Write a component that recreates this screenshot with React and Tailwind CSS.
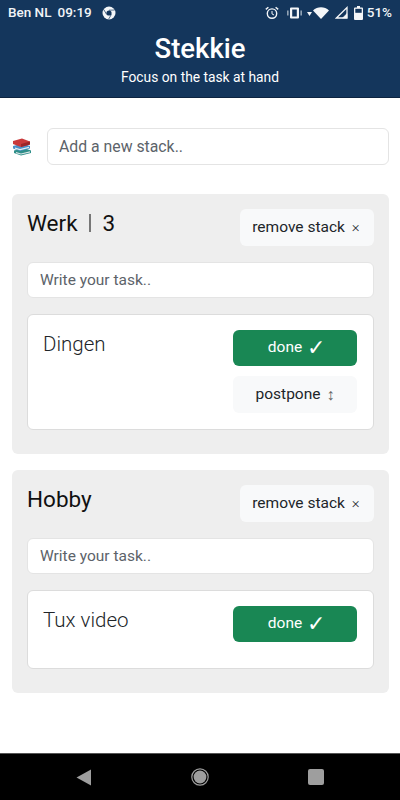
import { useState } from "react";

// status bar icons, drawn by hand
function ChromeIcon() {
  return (
    <svg width="14" height="14" viewBox="0 0 14 14">
      <circle cx="7" cy="7" r="6.5" fill="#f4f6f8" />
      <circle cx="7" cy="7" r="2.6" fill="#14365c" />
      <path d="M7 4.2 L12.6 4 M9.4 8.4 L6.6 13.2 M4.6 8.4 L1.8 3.6" stroke="#14365c" strokeWidth="0.7" />
    </svg>
  );
}

function StatusIcons() {
  return (
    <div className="flex items-center">
      <svg width="14" height="14" viewBox="0 0 14 14" className="mr-[8px]" fill="none" stroke="#f4f6f8">
        <circle cx="7" cy="7.6" r="4.7" strokeWidth="1.4" />
        <path d="M7 5v2.9l2 1.1" strokeWidth="1" />
        <path d="M0.8 3.4 L3.4 1.2 M13.2 3.4 L10.6 1.2" strokeWidth="1.4" />
      </svg>
      <svg width="15" height="12" viewBox="0 0 15 12" className="mr-[5px]" fill="#f4f6f8">
        <path d="M4 0.5h7a1 1 0 0 1 1 1v9a1 1 0 0 1-1 1H4a1 1 0 0 1-1-1v-9a1 1 0 0 1 1-1zM5.2 2.4v7.2h4.6V2.4z" />
        <rect x="0.2" y="3.5" width="1.3" height="5" opacity="0.7" />
        <rect x="13.5" y="3.5" width="1.3" height="5" opacity="0.7" />
      </svg>
      <svg width="5" height="4" viewBox="0 0 5 4" className="mr-[1px] mt-[3px]" fill="#f4f6f8">
        <path d="M0 0h5L2.5 4z" />
      </svg>
      <svg width="16" height="12" viewBox="0 0 16 12" className="mr-[6px]" fill="#f4f6f8">
        <path d="M0 3.4 C4.4 -0.8 11.6 -0.8 16 3.4 L8 12z" />
      </svg>
      <svg width="14" height="13" viewBox="0 0 14 13" className="mr-[5px]" fill="none" stroke="#f4f6f8">
        <path d="M1.4 12 L12 1.6 V12z" strokeWidth="1.3" />
        <path d="M7.5 12 L12 7.6 V12z" fill="#f4f6f8" strokeWidth="0.5" />
      </svg>
      <svg width="9" height="14" viewBox="0 0 9 14" className="mr-[4px]" fill="#f4f6f8">
        <path d="M3 0h3v1.4h2a1 1 0 0 1 1 1V13a1 1 0 0 1-1 1H1a1 1 0 0 1-1-1V2.4a1 1 0 0 1 1-1h2z" />
        <rect x="1.3" y="2.8" width="6.4" height="4" fill="#14365c" />
      </svg>
      <span className="text-[13.5px] font-medium text-[#f1f4f7]">51%</span>
    </div>
  );
}

function BooksIcon() {
  return (
    <svg width="20" height="18" viewBox="0 0 20 18">
      <path d="M2 12.5 L12 10 L19 12.5 V15 L9 17.5 L2 15z" fill="#2f8f8a" />
      <path d="M4 14 L9 15.4 L18 13.2 V14.4 L9 16.6 L4 15.2z" fill="#dfe6e6" />
      <path d="M1 8 L11 5.5 L18 8 V10.5 L8 13 L1 10.5z" fill="#4a90c8" />
      <path d="M3 9.6 L8 11 L17 8.8 V10 L8 12.2 L3 10.8z" fill="#e9eeee" />
      <path d="M1 3 L10 0.5 L18 3.4 V6.4 L9 9 L1 6z" fill="#c9393b" />
      <path d="M9 6 L18 3.4 V6.4 L9 9z" fill="#9c2528" />
    </svg>
  );
}

function Task({ name, postpone }) {
  return (
    <div className="flex justify-between bg-white rounded-md border border-[#dcdcdc] pl-[15px] pr-[16px] pt-[15px] pb-[16px]">
      <span className="text-[20.5px] leading-[28px] font-light text-[#212529]">{name}</span>
      <div className="flex flex-col w-[124px]">
        <button className="h-[36px] mb-[10px] pl-[3px] rounded-md bg-[#198754] text-white text-[15.5px] flex items-center justify-center">
          done <span className="ml-[5px] text-[22px] leading-none">✓</span>
        </button>
        {postpone && (
          <button className="h-[37px] rounded-md bg-[#f8f9fa] text-[#212529] text-[15.5px] flex items-center justify-center">
            postpone <span className="ml-[6px] text-[16px] font-light text-[#666]">↕</span>
          </button>
        )}
      </div>
    </div>
  );
}

function Stack({ title, count, tasks }) {
  return (
    <section className="bg-[#eeeeee] rounded-md px-[15px] pt-[15px] pb-[24px]">
      <div className="flex justify-between items-start h-[37px]">
        <h2 className="text-[22.5px] leading-[28px] text-[#111] font-normal flex items-center">
          {title}
          {count && (
            <>
              <span className="ml-[11px] mr-[12px] w-[2px] h-[18px] bg-[#777]" />
              {count}
            </>
          )}
        </h2>
        <button className="h-[37px] w-[134px] pr-[2px] rounded-md bg-[#f8f9fa] text-[#212529] text-[15.5px] flex items-center justify-center">
          remove stack <span className="ml-[7px] text-[15px] font-light">×</span>
        </button>
      </div>
      <input
        placeholder="Write your task.."
        className="mt-[16px] w-full h-[36px] rounded-md border border-[#e4e4e4] bg-white px-[12px] text-[15.5px] placeholder:text-[#5c636a] outline-none"
      />
      <div className="mt-[16px]">
        {tasks.map((t) => (
          <Task key={t.name} name={t.name} postpone={t.postpone} />
        ))}
      </div>
    </section>
  );
}

export default function App() {
  const [stack, setStack] = useState("");

  return (
    <div className="h-[800px] w-[400px] flex flex-col bg-white overflow-hidden font-['Roboto',sans-serif]">
      <header className="h-[98px] bg-[#14365c] border-b border-[#0d2440] text-white">
        <div className="h-[25px] pl-[8px] pr-[8px] flex items-center justify-between">
          <div className="flex items-center text-[13.5px] font-medium text-[#f1f4f7]">
            <span>Ben NL</span>
            <span className="ml-[6px]">09:19</span>
            <span className="ml-[10px]">
              <ChromeIcon />
            </span>
          </div>
          <StatusIcons />
        </div>
        <h1 className="text-center text-[27.5px] leading-[34px] font-medium mt-[7px]">Stekkie</h1>
        <p className="text-center text-[13.8px] leading-[20px] mt-[1px]">Focus on the task at hand</p>
      </header>

      <main className="flex-1 pl-[12px] pt-[30px] pr-[11px]">
        <div className="flex items-center">
          <span className="w-[35px] shrink-0">
            <BooksIcon />
          </span>
          <input
            value={stack}
            onChange={(e) => setStack(e.target.value)}
            placeholder="Add a new stack.."
            className="flex-1 min-w-0 h-[37px] rounded-md border border-[#e4e4e4] bg-white px-[11px] text-[15.8px] placeholder:text-[#5c636a] outline-none"
          />
        </div>

        <div className="mt-[29px] flex flex-col gap-[16px]">
          <Stack title="Werk" count="3" tasks={[{ name: "Dingen", postpone: true }]} />
          <Stack title="Hobby" tasks={[{ name: "Tux video" }]} />
        </div>
      </main>

      <nav className="h-[47px] bg-black border-t border-[#555] flex items-center justify-center gap-[99px] pr-[1px]">
        <svg width="16" height="17" viewBox="0 0 16 17" fill="#9e9e9e">
          <path d="M15 0.5V16.5L0.5 8.5z" />
        </svg>
        <svg width="18" height="18" viewBox="0 0 18 18">
          <circle cx="9" cy="9" r="8.2" fill="none" stroke="#9e9e9e" strokeWidth="1.2" />
          <circle cx="9" cy="9" r="6.4" fill="#9e9e9e" />
        </svg>
        <div className="w-[16px] h-[16px] rounded-[2px] bg-[#9e9e9e]" />
      </nav>
    </div>
  );
}
